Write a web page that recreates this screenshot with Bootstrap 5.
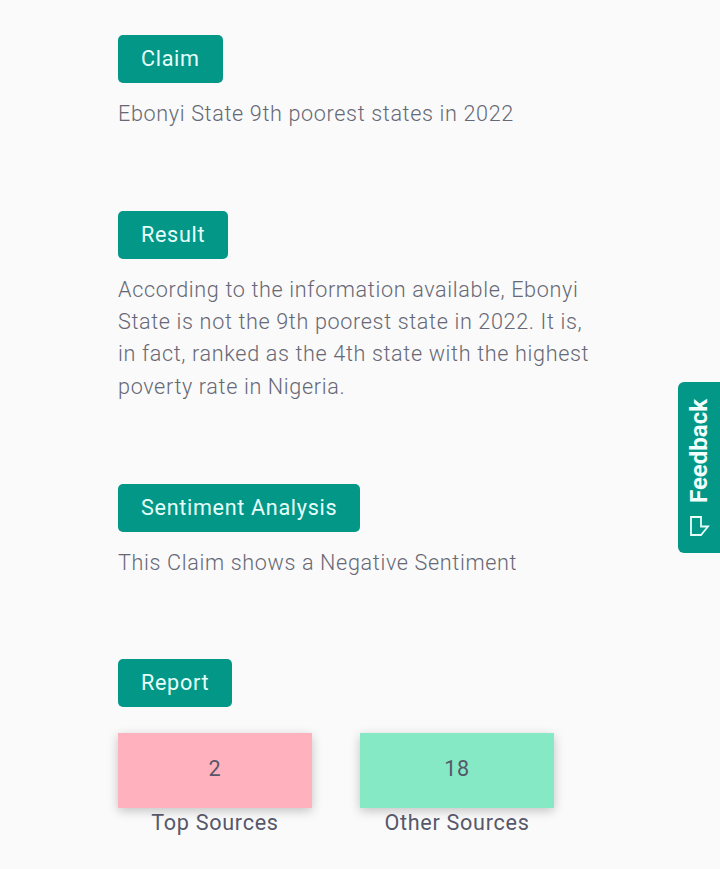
<!DOCTYPE html>
<html lang="en">
<head>
<meta charset="utf-8">
<title>Claim</title>
<link href="https://cdn.jsdelivr.net/npm/bootstrap@5.3.0/dist/css/bootstrap.min.css" rel="stylesheet">
<style>
html,body{height:869px;overflow:hidden}
body{background:#fafafa;font-family:Roboto,sans-serif;color:#56586a;letter-spacing:.7px}
.page-wrap{padding:35px 118px 0;box-sizing:content-box;width:484px}
.tag-btn{background:#039788;color:#e6fffa;border:0;border-radius:5px;height:48px;padding:0 23px;font-size:21.6px;font-weight:400;letter-spacing:.68px;line-height:48px}
.tag-btn:hover{background:#039788;color:#e6fffa}
.para{font-size:21.6px;font-weight:300;line-height:32.2px;color:#666875;margin:15px 0 0;letter-spacing:.65px}
.block-claim{height:176px}
.block-result{height:273px}
.block-sent{height:175px}
.stat-row{gap:48px;margin-top:26px}
.stat-col{width:194px;text-align:center}
.stat-box{height:75px;font-size:21.6px;font-weight:400;display:flex;align-items:center;justify-content:center;padding-bottom:2px;box-shadow:0 3px 10px rgba(0,0,0,.22)}
.stat-pink{background:#ffb1be}
.stat-green{background:#86e9c5}
.stat-label{font-size:21.6px;line-height:30px}
.feedback-tab{position:absolute;top:382px;left:678px;width:42px;height:171px;background:#039788;border-radius:6px 0 0 6px;color:#fff;display:flex;flex-direction:column-reverse;align-items:center;padding:0 0 17px;gap:13px}
.feedback-text{writing-mode:vertical-rl;transform:rotate(180deg);font-size:24px;font-weight:700;letter-spacing:0;line-height:42px;color:#f2fffc}
.feedback-icon{margin-left:2px}
</style>
</head>
<body>
<main class="page-wrap">
  <section class="block-claim">
    <button class="btn tag-btn" type="button">Claim</button>
    <p class="para">Ebonyi State 9th poorest states in 2022</p>
  </section>
  <section class="block-result">
    <button class="btn tag-btn" type="button">Result</button>
    <p class="para">According to the information available, Ebonyi State is not the 9th poorest state in 2022. It is, in fact, ranked as the 4th state with the highest poverty rate in Nigeria.</p>
  </section>
  <section class="block-sent">
    <button class="btn tag-btn" type="button">Sentiment Analysis</button>
    <p class="para">This Claim shows a Negative Sentiment</p>
  </section>
  <section>
    <button class="btn tag-btn" type="button">Report</button>
    <div class="d-flex stat-row">
      <div class="stat-col">
        <div class="stat-box stat-pink">2</div>
        <div class="stat-label">Top Sources</div>
      </div>
      <div class="stat-col">
        <div class="stat-box stat-green">18</div>
        <div class="stat-label">Other Sources</div>
      </div>
    </div>
  </section>
</main>
<aside class="feedback-tab">
  <svg class="feedback-icon" width="20" height="20" viewBox="0 0 20 20" fill="none" stroke="#e6fffa" stroke-width="1.8"><path d="M1 1H11V10.5H18L11 19H1Z"/></svg>
  <span class="feedback-text">Feedback</span>
</aside>
<script src="https://cdn.jsdelivr.net/npm/bootstrap@5.3.0/dist/js/bootstrap.bundle.min.js"></script>
</body>
</html>
